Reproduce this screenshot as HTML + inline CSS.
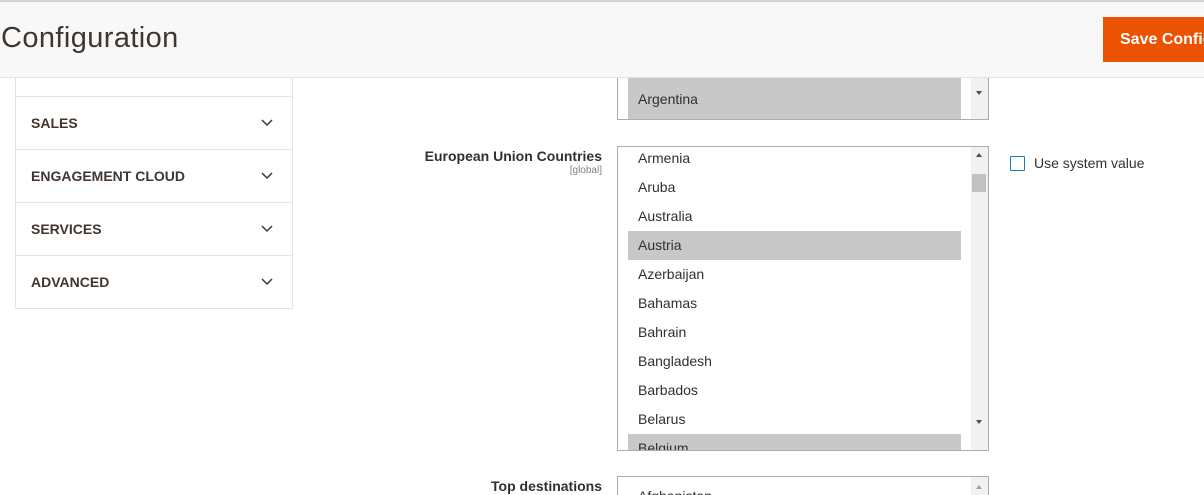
<!DOCTYPE html>
<html style="width:1204px;height:495px;overflow:hidden"><head><style>
*{margin:0;padding:0;box-sizing:border-box}
body{width:1204px;height:495px;overflow:hidden;background:#fff;font-family:"Liberation Sans",sans-serif;color:#303030;position:relative}
.hdr{position:absolute;left:0;top:0;width:1204px;height:78px;background:#f8f8f8;border-top:2px solid #d4d4d4;border-bottom:1px solid #e3e3e3;z-index:5}
.hdr h1{position:absolute;left:1px;top:20px;font-size:29px;font-weight:normal;color:#41362f;letter-spacing:0.4px}
.btn{position:absolute;left:1103px;top:15px;width:120px;height:45px;background:#eb5202;color:#fff;font-weight:bold;font-size:16px;line-height:45px;padding-left:17px;white-space:nowrap}
.side{position:absolute;left:15px;top:40px;width:278px;height:269px;border:1px solid #e3e3e3;border-top:none}
.item{position:absolute;left:0;width:276px;height:53px;border-top:1px solid #e3e3e3;font-weight:bold;font-size:14px;color:#41362f;padding-left:15px;line-height:53px}
.item svg{position:absolute;right:19px;top:22px}
.sel{position:absolute;left:617px;width:372px;border:1px solid #adadad;background:#fff;overflow:hidden}
.opt{position:absolute;left:10px;width:333px;height:29px;font-size:14px;line-height:29px;padding-left:10px;color:#303030}
.opt.h{background:#c8c8c8}
.sb{position:absolute;right:0;top:0;width:17px;height:100%;background:#f1f1f1}
.lab{position:absolute;right:602px;text-align:right;font-size:14px;font-weight:bold;color:#303030;white-space:nowrap}
.tri{position:absolute;left:5px;width:0;height:0;border-left:3.5px solid transparent;border-right:3.5px solid transparent}
</style></head><body>
<div class="hdr"><h1>Configuration</h1><div class="btn">Save Config</div></div>
<div class="side">
<div class="item" style="top:56px">SALES<svg width="12" height="8" viewBox="0 0 12 8"><path d="M1 1l5 5 5-5" fill="none" stroke="#41362f" stroke-width="1.5"/></svg></div>
<div class="item" style="top:109px">ENGAGEMENT CLOUD<svg width="12" height="8" viewBox="0 0 12 8"><path d="M1 1l5 5 5-5" fill="none" stroke="#41362f" stroke-width="1.5"/></svg></div>
<div class="item" style="top:162px">SERVICES<svg width="12" height="8" viewBox="0 0 12 8"><path d="M1 1l5 5 5-5" fill="none" stroke="#41362f" stroke-width="1.5"/></svg></div>
<div class="item" style="top:215px">ADVANCED<svg width="12" height="8" viewBox="0 0 12 8"><path d="M1 1l5 5 5-5" fill="none" stroke="#41362f" stroke-width="1.5"/></svg></div>
</div>
<div class="sel" style="top:40px;height:80px">
<div class="opt h" style="top:15px">Angola</div>
<div class="opt h" style="top:44px;height:36px">Argentina</div>
<div class="sb"><div class="tri" style="top:50px;border-top:4px solid #505050"></div></div>
</div>
<div class="lab" style="top:148px">European Union Countries</div>
<div style="position:absolute;right:602px;top:165px;font-size:10px;color:#808080">[global]</div>
<div class="sel" style="top:146px;height:305px">
<div class="opt" style="top:-3px">Armenia</div>
<div class="opt" style="top:26px">Aruba</div>
<div class="opt" style="top:55px">Australia</div>
<div class="opt h" style="top:84px">Austria</div>
<div class="opt" style="top:113px">Azerbaijan</div>
<div class="opt" style="top:142px">Bahamas</div>
<div class="opt" style="top:171px">Bahrain</div>
<div class="opt" style="top:200px">Bangladesh</div>
<div class="opt" style="top:229px">Barbados</div>
<div class="opt" style="top:258px">Belarus</div>
<div class="opt h" style="top:287px">Belgium</div>
<div class="sb"><div class="tri" style="top:6px;border-bottom:4px solid #505050"></div><div style="position:absolute;left:1px;top:27px;width:14px;height:18px;background:#c1c1c1"></div><div class="tri" style="top:273px;border-top:4px solid #505050"></div></div>
</div>
<div style="position:absolute;left:1010px;top:156px;width:15px;height:15px;border:1px solid #1979c3;border-radius:1px"></div>
<div style="position:absolute;left:1034px;top:155px;font-size:14px;color:#303030">Use system value</div>
<div class="lab" style="top:478px">Top destinations</div>
<div class="sel" style="top:476px;height:40px">
<div class="opt" style="top:5px">Afghanistan</div>
<div class="sb"><div class="tri" style="top:8px;border-bottom:4px solid #a0a0a0"></div></div>
</div>
</body></html>
